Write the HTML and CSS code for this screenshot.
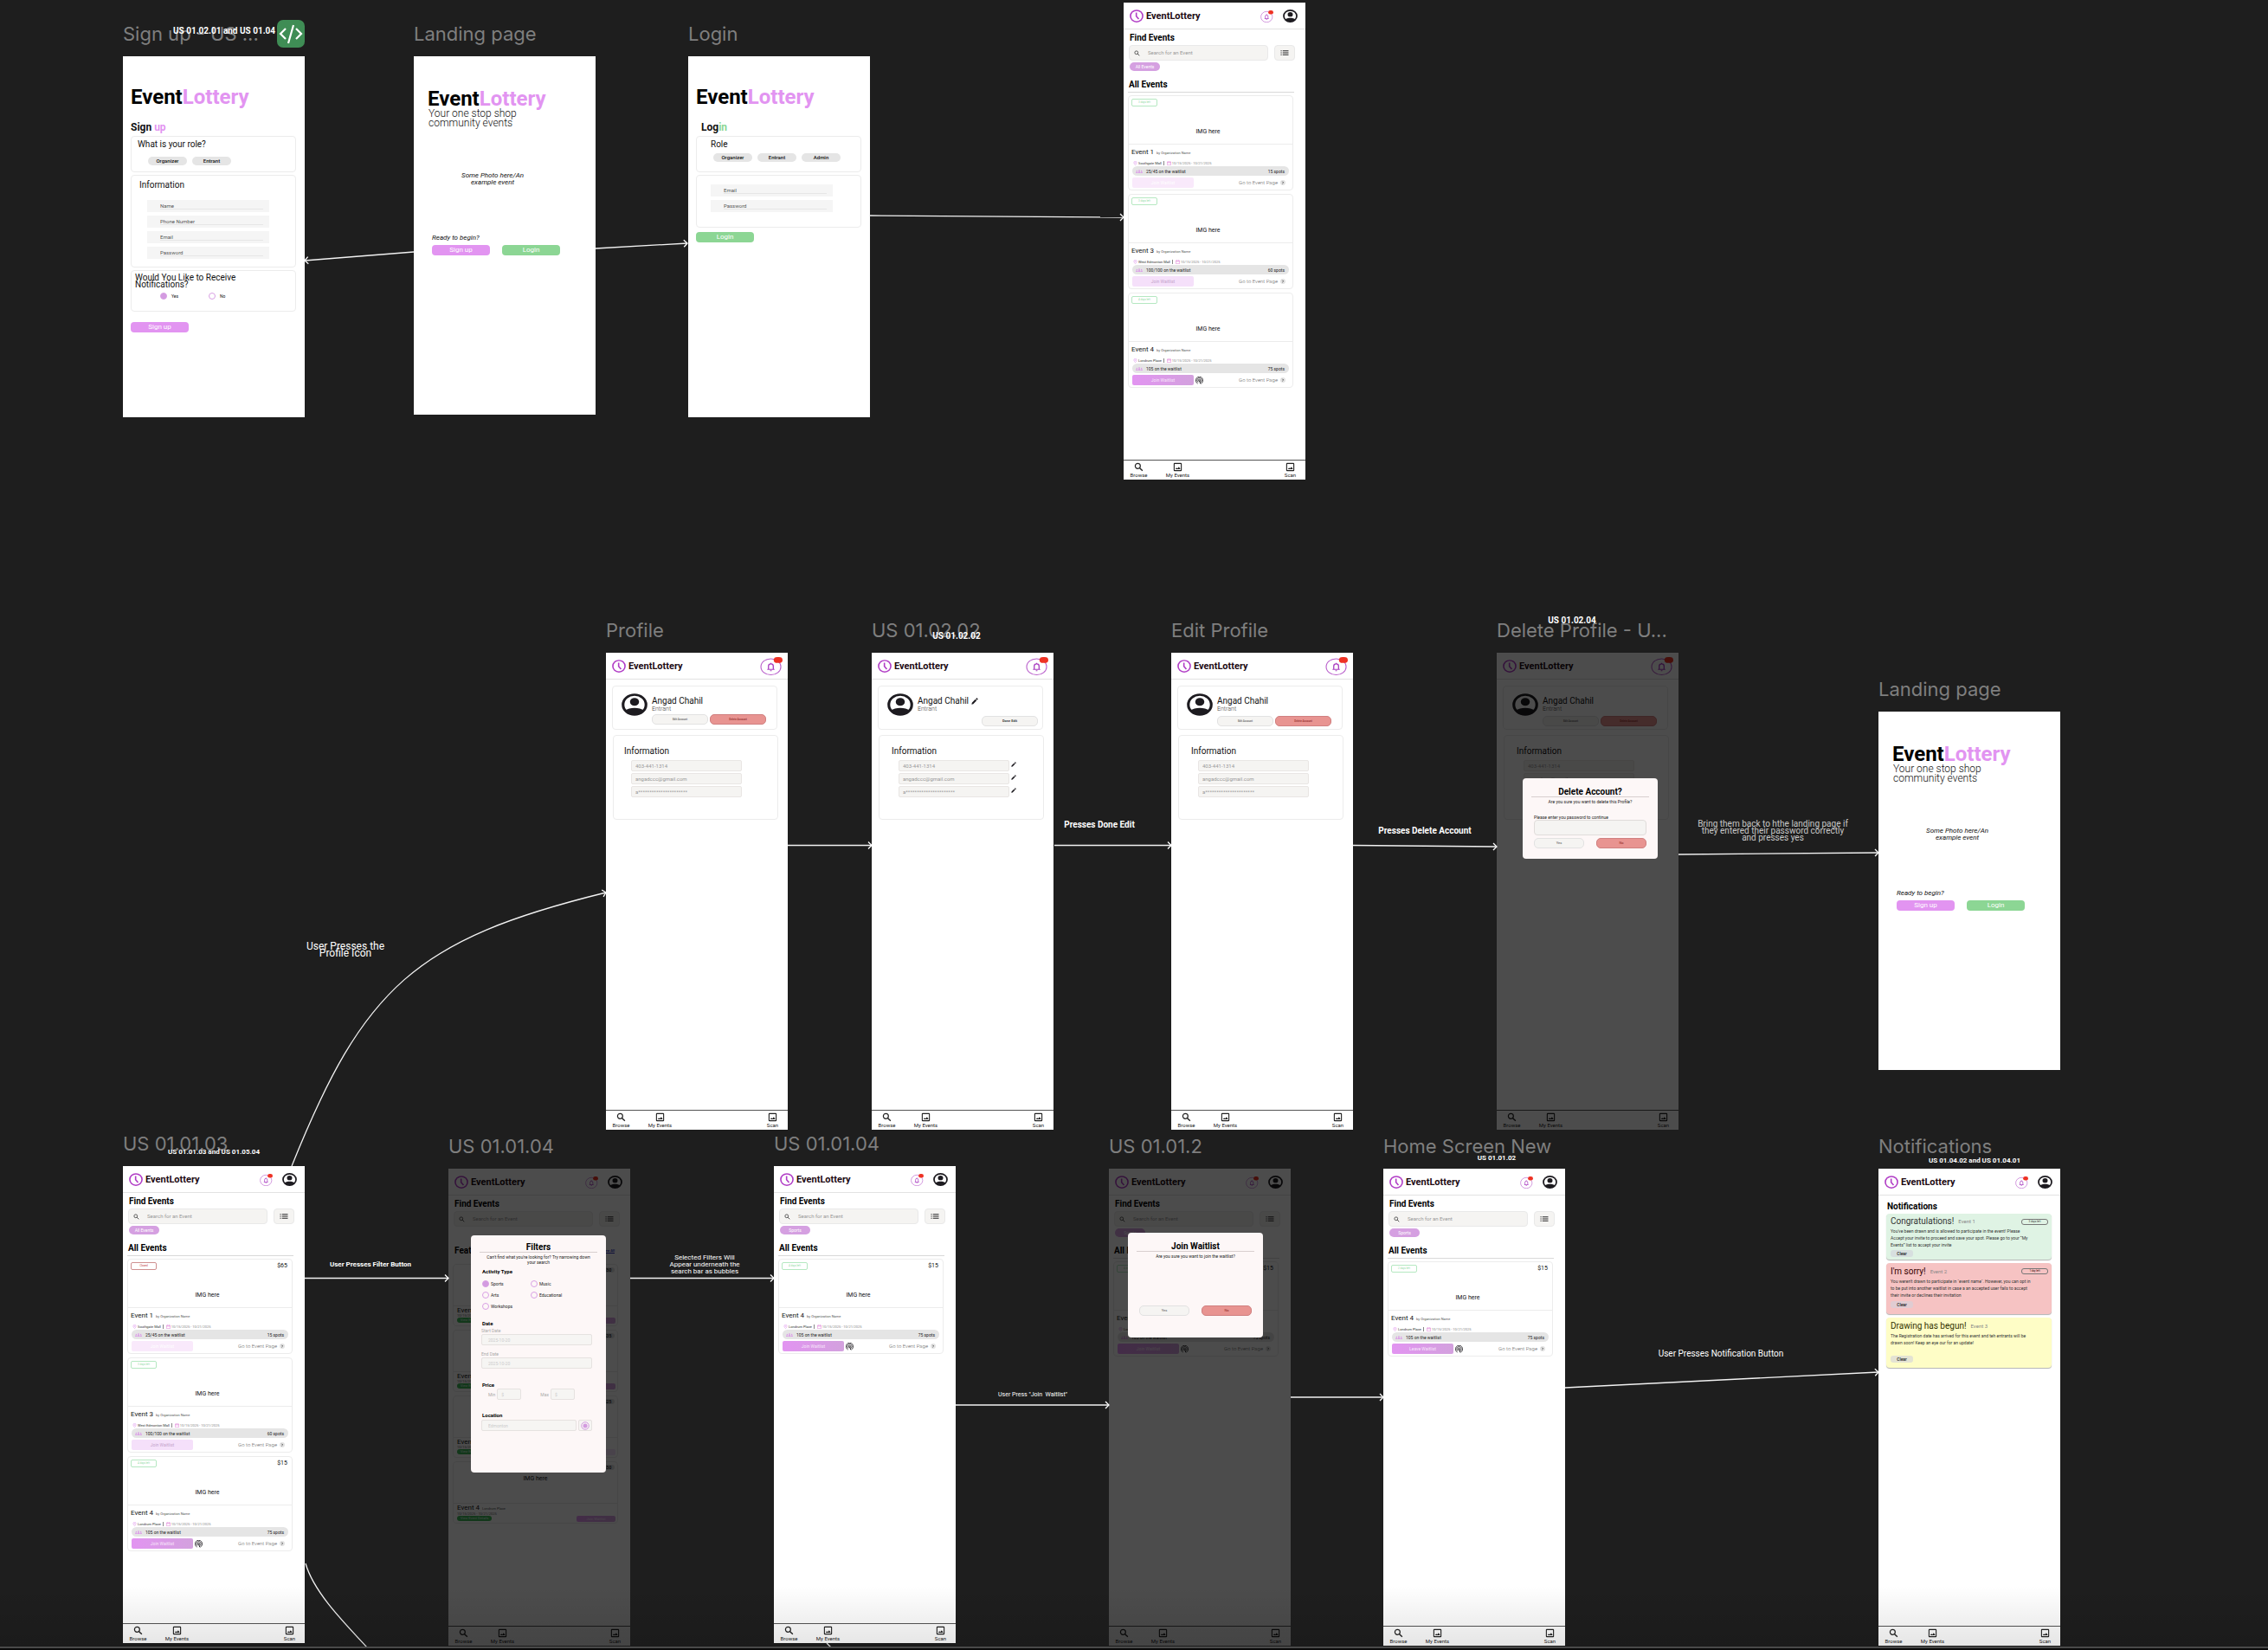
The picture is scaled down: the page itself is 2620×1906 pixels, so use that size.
FILE: index.html
```html
<!DOCTYPE html>
<html lang="en">
<head>
<meta charset="utf-8">
<title>EventLottery – screen flow</title>
<link rel="stylesheet" href="styles.css">
</head>
<body>
<svg class="defs" aria-hidden="true">
  <symbol id="logo" viewBox="0 0 24 24" preserveAspectRatio="none"><circle cx="12" cy="12" r="10.6" fill="none" stroke="#b13dc6" stroke-width="2.4"/><path d="M11.5 5.5v7l4.2 5" fill="none" stroke="#b13dc6" stroke-width="2.4"/></symbol>
  <symbol id="bell" viewBox="0 0 28 28" preserveAspectRatio="none"><circle cx="13.5" cy="15" r="12.4" fill="none" stroke="#b95fcb" stroke-width="1.2"/><path d="M9 19h9M10.500 19v-5a3 3.500 0 0 1 6 0v5M13.500 10.500v-1.500M12.500 21h2" fill="none" stroke="#a93cc0" stroke-width="1.400"/><rect x="17" y="0" width="11" height="9" rx="4.500" fill="#ee3224"/></symbol>
  <symbol id="avatar" viewBox="0 0 24 24" preserveAspectRatio="none"><circle cx="12" cy="12" r="10.600" fill="none" stroke="#1d1b20" stroke-width="2.500"/><circle cx="12" cy="9" r="4.200" fill="#1d1b20"/><path d="M3.500 18.500C7 14.500 17 14.500 20.500 18.500C18 24 6 24 3.500 18.500z" fill="#1d1b20"/></symbol>
  <symbol id="search" viewBox="0 0 24 24"><circle cx="9.500" cy="9.500" r="6.500" fill="none" stroke="currentColor" stroke-width="2.600"/><path d="M14.500 14.500l7 7" stroke="currentColor" stroke-width="3"/></symbol>
  <symbol id="list" viewBox="0 0 24 16"><path d="M6 2h18M6 8h18M6 14h18M0 2h3M0 8h3M0 14h3" stroke="#222" stroke-width="2.600"/></symbol>
  <symbol id="image" viewBox="0 0 24 24"><rect x="3" y="3" width="18" height="18" rx="1" fill="none" stroke="currentColor" stroke-width="2.400"/><path d="M6 17.500l3-4 2.500 2.500 3.500-4.500 4 6z" fill="currentColor"/></symbol>
  <symbol id="pin" viewBox="0 0 12 14"><path d="M6 1a4.500 4.500 0 0 1 4.500 4.500C10.500 9 6 13 6 13S1.500 9 1.500 5.500A4.500 4.500 0 0 1 6 1z" fill="none" stroke="#df93ec" stroke-width="1.600"/><circle cx="6" cy="5.500" r="1.500" fill="#df93ec"/></symbol>
  <symbol id="cal" viewBox="0 0 14 14"><path d="M1 3h12v10H1zM1 5.500h12M4 1v2M10 1v2" fill="none" stroke="#e07fd6" stroke-width="1.600"/></symbol>
  <symbol id="people" viewBox="0 0 24 12"><g fill="#d98ae8"><circle cx="4" cy="4" r="2"/><circle cx="12" cy="3" r="2.600"/><circle cx="20" cy="4" r="2"/><path d="M0 11c0-5 7-5 7 0zM7.500 11c0-6 9-6 9 0zM17 11c0-5 7-5 7 0z"/></g></symbol>
  <symbol id="go" viewBox="0 0 14 14"><circle cx="7" cy="7" r="7" fill="#e3e3e3"/><path d="M5.500 4l3 3-3 3" fill="none" stroke="#333" stroke-width="1.800"/></symbol>
  <symbol id="radar" viewBox="0 0 24 24"><path d="M7 21.500a11 11 0 1 1 10 0M8.500 17.500a7 7 0 1 1 7 0" fill="none" stroke="#1d1b20" stroke-width="2.200"/><circle cx="12" cy="11.500" r="3" fill="none" stroke="#1d1b20" stroke-width="2"/><path d="M12 12l3.500 10" stroke="#1d1b20" stroke-width="2.600"/></symbol>
  <symbol id="pencil" viewBox="0 0 24 24"><path d="M1 23l1.500-6L14 5.500l4.500 4.500L7 21.500zM15.500 4l2.500-2.500c1-1 2-.5 3 .500l1 1c1 1 1.500 2 .500 3L20 8.500z" fill="#1d1b20"/></symbol>
  <symbol id="locate" viewBox="0 0 20 20"><circle cx="10" cy="10" r="8.500" fill="none" stroke="#d39be0" stroke-width="2"/><circle cx="10" cy="10" r="5" fill="#d39be0"/></symbol>
</svg>

<main class="board">

<section class="screen signup short" id="s-signup">
  <h2 class="name">Sign up - US ...</h2>
  <h1 class="brand">Event<span>Lottery</span></h1>
  <h3 class="step">Sign <span class="pink">up</span></h3>
  <div class="panel role">
    <h4>What is your role?</h4>
    <div class="chips"><button>Organizer</button><button>Entrant</button></div>
  </div>
  <div class="panel info">
    <h4>Information</h4>
    <label class="field"><input aria-label="Name" placeholder="Name"></label>
    <label class="field"><input aria-label="Phone Number" placeholder="Phone Number"></label>
    <label class="field"><input aria-label="Email" placeholder="Email"></label>
    <label class="field"><input aria-label="Password" placeholder="Password"></label>
  </div>
  <div class="panel notify">
    <h4>Would You Like to Receive Notifications?</h4>
    <div class="radios"><label><input type="radio" name="n" checked>Yes</label><label><input type="radio" name="n">No</label></div>
  </div>
  <button class="cta pinkbg">Sign up</button>
</section>

<section class="screen landing short" id="s-landing1">
  <h2 class="name">Landing page</h2>
  <h1 class="brand">Event<span>Lottery</span></h1>
  <p class="tagline">Your one stop shop<br>community events</p>
  <p class="photo-note">Some Photo here/An<br>example event</p>
  <p class="ready">Ready to begin?</p>
  <div class="ctas"><button class="cta pinkbg">Sign up</button><button class="cta greenbg">Login</button></div>
</section>

<section class="screen login short" id="s-login">
  <h2 class="name">Login</h2>
  <h1 class="brand">Event<span>Lottery</span></h1>
  <h3 class="step">Log<span class="green">in</span></h3>
  <div class="panel role">
    <h4>Role</h4>
    <div class="chips"><button>Organizer</button><button>Entrant</button><button>Admin</button></div>
  </div>
  <div class="panel creds">
    <label class="field"><input aria-label="Email" placeholder="Email"></label>
    <label class="field"><input aria-label="Password" placeholder="Password"></label>
  </div>
  <button class="cta greenbg">Login</button>
</section>

<section class="screen" id="s-home1">
  <header class="top"><svg class="logo"><use href="#logo"/></svg><b>EventLottery</b><svg class="bell"><use href="#bell"/></svg><svg class="avatar"><use href="#avatar"/></svg></header>
  <h3 class="find">Find Events</h3>
  <div class="searchrow"><label class="search"><svg><use href="#search"/></svg><input aria-label="Search" placeholder="Search for an Event"></label><button class="filter" aria-label="Filters"><svg><use href="#list"/></svg></button></div>
  <span class="bubble">All Events</span>
  <h3 class="all">All Events</h3>
  <div class="cards">
    <article class="card"><div class="photo"><div><span class="tag">3 days left</span></div><p>IMG here</p></div>
      <h4>Event 1 <small>by Organization Name</small></h4>
      <p class="meta"><svg><use href="#pin"/></svg><span>Southgate Mall</span><svg><use href="#cal"/></svg><time>10/15/2025 - 10/21/2025</time></p>
      <p class="wait"><svg><use href="#people"/></svg><span>25/45 on the waitlist</span><span>15 spots</span></p>
      <div class="acts"><button class="join off1">Join Waitlist</button><a href="#">Go to Event Page<svg><use href="#go"/></svg></a></div></article>
    <article class="card"><div class="photo"><div><span class="tag">3 days left</span></div><p>IMG here</p></div>
      <h4>Event 3 <small>by Organization Name</small></h4>
      <p class="meta"><svg><use href="#pin"/></svg><span>West Edmonton Mall</span><svg><use href="#cal"/></svg><time>10/15/2025 - 10/21/2025</time></p>
      <p class="wait"><svg><use href="#people"/></svg><span>100/100 on the waitlist</span><span>60 spots</span></p>
      <div class="acts"><button class="join off2">Join Waitlist</button><a href="#">Go to Event Page<svg><use href="#go"/></svg></a></div></article>
    <article class="card"><div class="photo"><div><span class="tag">4 days left</span></div><p>IMG here</p></div>
      <h4>Event 4 <small>by Organization Name</small></h4>
      <p class="meta"><svg><use href="#pin"/></svg><span>Londrum Place</span><svg><use href="#cal"/></svg><time>10/15/2025 - 10/21/2025</time></p>
      <p class="wait"><svg><use href="#people"/></svg><span>105 on the waitlist</span><span>75 spots</span></p>
      <div class="acts"><button class="join">Join Waitlist</button><svg class="radar"><use href="#radar"/></svg><a href="#">Go to Event Page<svg><use href="#go"/></svg></a></div></article>
  </div>
  <nav><a href="#"><svg><use href="#search"/></svg>Browse</a><a href="#"><svg><use href="#image"/></svg>My Events</a><a href="#"><svg><use href="#image"/></svg>Scan</a></nav>
</section>

<section class="screen" id="s-profile">
  <h2 class="name">Profile</h2>
  <header class="top"><svg class="logo"><use href="#logo"/></svg><b>EventLottery</b><svg class="bell wide"><use href="#bell"/></svg></header>
  <div class="panel person"><svg class="face"><use href="#avatar"/></svg><div><h4>Angad Chahil</h4><p>Entrant</p><div class="pills"><button>Edit Account</button><button class="red">Delete Account</button></div></div></div>
  <div class="panel details"><h4>Information</h4>
    <input aria-label="Phone" value="403-441-1314"><input class="mail" aria-label="Email" value="angadccc@gmail.com"><input aria-label="Password" value="a**********************"></div>
  <nav><a href="#"><svg><use href="#search"/></svg>Browse</a><a href="#"><svg><use href="#image"/></svg>My Events</a><a href="#"><svg><use href="#image"/></svg>Scan</a></nav>
</section>

<section class="screen" id="s-editing">
  <h2 class="name">US 01.02.02</h2>
  <header class="top"><svg class="logo"><use href="#logo"/></svg><b>EventLottery</b><svg class="bell wide"><use href="#bell"/></svg></header>
  <div class="panel person"><svg class="face"><use href="#avatar"/></svg><div><h4>Angad Chahil<svg class="pen"><use href="#pencil"/></svg></h4><p>Entrant</p><div class="pills low end"><button class="done">Done Edit</button></div></div></div>
  <div class="panel details indent"><h4>Information</h4>
    <div class="row"><input aria-label="Phone" value="403-441-1314"><svg><use href="#pencil"/></svg></div><div class="row"><input class="mail" aria-label="Email" value="angadccc@gmail.com"><svg><use href="#pencil"/></svg></div><div class="row"><input aria-label="Password" value="a**********************"><svg><use href="#pencil"/></svg></div></div>
  <nav><a href="#"><svg><use href="#search"/></svg>Browse</a><a href="#"><svg><use href="#image"/></svg>My Events</a><a href="#"><svg><use href="#image"/></svg>Scan</a></nav>
</section>

<section class="screen" id="s-edit">
  <h2 class="name">Edit Profile</h2>
  <header class="top"><svg class="logo"><use href="#logo"/></svg><b>EventLottery</b><svg class="bell wide"><use href="#bell"/></svg></header>
  <div class="panel person"><svg class="face"><use href="#avatar"/></svg><div><h4>Angad Chahil</h4><p>Entrant</p><div class="pills low"><button>Edit Account</button><button class="red">Delete Account</button></div></div></div>
  <div class="panel details indent"><h4>Information</h4>
    <input aria-label="Phone" value="403-441-1314"><input class="mail" aria-label="Email" value="angadccc@gmail.com"><input aria-label="Password" value="a**********************"></div>
  <nav><a href="#"><svg><use href="#search"/></svg>Browse</a><a href="#"><svg><use href="#image"/></svg>My Events</a><a href="#"><svg><use href="#image"/></svg>Scan</a></nav>
</section>

<section class="screen" id="s-delete">
  <h2 class="name">Delete Profile - U...</h2>
  <header class="top"><svg class="logo"><use href="#logo"/></svg><b>EventLottery</b><svg class="bell wide"><use href="#bell"/></svg></header>
  <div class="panel person"><svg class="face"><use href="#avatar"/></svg><div><h4>Angad Chahil</h4><p>Entrant</p><div class="pills low"><button>Edit Account</button><button class="red">Delete Account</button></div></div></div>
  <div class="panel details indent"><h4>Information</h4>
    <input aria-label="Phone" value="403-441-1314"><input class="mail" aria-label="Email" value="angadccc@gmail.com"></div>
  <nav><a href="#"><svg><use href="#search"/></svg>Browse</a><a href="#"><svg><use href="#image"/></svg>My Events</a><a href="#"><svg><use href="#image"/></svg>Scan</a></nav>
  <div class="shade"><div class="modal del">
    <h3>Delete Account?</h3><p>Are you sure you want to delete this Profile?</p>
    <label>Please enter you password to continue<input type="password"></label>
    <div class="yn"><button>Yes</button><button class="red">No</button></div>
  </div></div>
</section>

<section class="screen landing short" id="s-landing2">
  <h2 class="name">Landing page</h2>
  <h1 class="brand">Event<span>Lottery</span></h1>
  <p class="tagline">Your one stop shop<br>community events</p>
  <p class="photo-note">Some Photo here/An<br>example event</p>
  <p class="ready">Ready to begin?</p>
  <div class="ctas"><button class="cta pinkbg">Sign up</button><button class="cta greenbg">Login</button></div>
</section>

<section class="screen" id="s-home2">
  <h2 class="name">US 01.01.03</h2>
  <header class="top"><svg class="logo"><use href="#logo"/></svg><b>EventLottery</b><svg class="bell"><use href="#bell"/></svg><svg class="avatar"><use href="#avatar"/></svg></header>
  <h3 class="find">Find Events</h3>
  <div class="searchrow"><label class="search"><svg><use href="#search"/></svg><input aria-label="Search" placeholder="Search for an Event"></label><button class="filter" aria-label="Filters"><svg><use href="#list"/></svg></button></div>
  <span class="bubble">All Events</span>
  <h3 class="all">All Events</h3>
  <div class="cards">
    <article class="card"><div class="photo"><div><span class="tag closed">Closed</span><b>$65</b></div><p>IMG here</p></div>
      <h4>Event 1 <small>by Organization Name</small></h4>
      <p class="meta"><svg><use href="#pin"/></svg><span>Southgate Mall</span><svg><use href="#cal"/></svg><time>10/15/2025 - 10/21/2025</time></p>
      <p class="wait"><svg><use href="#people"/></svg><span>25/45 on the waitlist</span><span>15 spots</span></p>
      <div class="acts"><button class="join off1">Join Waitlist</button><a href="#">Go to Event Page<svg><use href="#go"/></svg></a></div></article>
    <article class="card"><div class="photo"><div><span class="tag">3 days left</span></div><p>IMG here</p></div>
      <h4>Event 3 <small>by Organization Name</small></h4>
      <p class="meta"><svg><use href="#pin"/></svg><span>West Edmonton Mall</span><svg><use href="#cal"/></svg><time>10/15/2025 - 10/21/2025</time></p>
      <p class="wait"><svg><use href="#people"/></svg><span>100/100 on the waitlist</span><span>60 spots</span></p>
      <div class="acts"><button class="join off2">Join Waitlist</button><a href="#">Go to Event Page<svg><use href="#go"/></svg></a></div></article>
    <article class="card"><div class="photo"><div><span class="tag">4 days left</span><b>$15</b></div><p>IMG here</p></div>
      <h4>Event 4 <small>by Organization Name</small></h4>
      <p class="meta"><svg><use href="#pin"/></svg><span>Londrum Place</span><svg><use href="#cal"/></svg><time>10/15/2025 - 10/21/2025</time></p>
      <p class="wait"><svg><use href="#people"/></svg><span>105 on the waitlist</span><span>75 spots</span></p>
      <div class="acts"><button class="join">Join Waitlist</button><svg class="radar"><use href="#radar"/></svg><a href="#">Go to Event Page<svg><use href="#go"/></svg></a></div></article>
  </div>
  <nav><a href="#"><svg><use href="#search"/></svg>Browse</a><a href="#"><svg><use href="#image"/></svg>My Events</a><a href="#"><svg><use href="#image"/></svg>Scan</a></nav>
</section>

<section class="screen" id="s-filter">
  <h2 class="name">US 01.01.04</h2>
  <header class="top"><svg class="logo"><use href="#logo"/></svg><b>EventLottery</b><svg class="bell"><use href="#bell"/></svg><svg class="avatar"><use href="#avatar"/></svg></header>
  <h3 class="find">Find Events</h3>
  <div class="searchrow"><label class="search"><svg><use href="#search"/></svg><input aria-label="Search" placeholder="Search for an Event"></label><button class="filter" aria-label="Filters"><svg><use href="#list"/></svg></button></div>
  <h3 class="featured">Featured <a href="#">View All</a></h3>
  <div class="feats">
    <article class="feat"><div class="pic"><b>$50</b><p>IMG here</p></div><h4>Event 1</h4><time>10/15/2025 - 10/21/2025</time><div class="both"><button class="view">View Event Details</button><button class="join">Join Waitlist</button></div></article>
    <article class="feat"><div class="pic"><b>$35</b><p>IMG here</p></div><h4>Event 2</h4><time>10/15/2025 - 10/21/2025</time><div class="both"><button class="view">View Event Details</button><button class="join">Join Waitlist</button></div></article>
    <article class="feat"><div class="pic"><b>$25</b><p>IMG here</p></div><h4>Event 3</h4><time>10/15/2025 - 10/21/2025</time><div class="both"><button class="view">View Event Details</button><button class="join off2">Join Waitlist</button></div></article>
    <article class="feat"><div class="pic"><b>$50</b><p>IMG here</p></div><h4>Event 4 <small>Londrum Place</small></h4><time>10/15/2025 - 10/21/2025</time><div class="both"><button class="view">View Event Details</button><button class="join">Join Waitlist</button></div></article>
  </div>
  <nav><a href="#"><svg><use href="#search"/></svg>Browse</a><a href="#"><svg><use href="#image"/></svg>My Events</a><a href="#"><svg><use href="#image"/></svg>Scan</a></nav>
  <div class="shade"><form class="modal filters">
    <h3>Filters</h3><p>Can't find what you're looking for? Try narrowing down your search</p>
    <h4>Activity Type</h4>
    <div class="types"><label><input type="radio" name="t" checked>Sports</label><label><input type="radio" name="t">Music</label><label><input type="radio" name="t">Arts</label><label><input type="radio" name="t">Educational</label><label><input type="radio" name="t">Workshops</label></div>
    <h4 class="date">Date</h4>
    <label class="lab">Start Date<input placeholder="2025-10-20"></label>
    <label class="lab second">End Date<input placeholder="2025-10-20"></label>
    <h4 class="price">Price</h4>
    <div class="range"><label>Min<input placeholder="$"></label><label>Max<input placeholder="$"></label></div>
    <h4 class="place">Location</h4>
    <div class="loc"><input aria-label="Location" placeholder="Edmonton"><button type="button" aria-label="Locate me"><svg><use href="#locate"/></svg></button></div>
  </form></div>
</section>

<section class="screen" id="s-sports">
  <h2 class="name">US 01.01.04</h2>
  <header class="top"><svg class="logo"><use href="#logo"/></svg><b>EventLottery</b><svg class="bell"><use href="#bell"/></svg><svg class="avatar"><use href="#avatar"/></svg></header>
  <h3 class="find">Find Events</h3>
  <div class="searchrow"><label class="search"><svg><use href="#search"/></svg><input aria-label="Search" placeholder="Search for an Event"></label><button class="filter" aria-label="Filters"><svg><use href="#list"/></svg></button></div>
  <span class="bubble">Sports</span>
  <h3 class="all">All Events</h3>
  <div class="cards">
    <article class="card"><div class="photo"><div><span class="tag">4 days left</span><b>$15</b></div><p>IMG here</p></div>
      <h4>Event 4 <small>by Organization Name</small></h4>
      <p class="meta"><svg><use href="#pin"/></svg><span>Londrum Place</span><svg><use href="#cal"/></svg><time>10/15/2025 - 10/21/2025</time></p>
      <p class="wait"><svg><use href="#people"/></svg><span>105 on the waitlist</span><span>75 spots</span></p>
      <div class="acts"><button class="join">Join Waitlist</button><svg class="radar"><use href="#radar"/></svg><a href="#">Go to Event Page<svg><use href="#go"/></svg></a></div></article>
  </div>
  <nav><a href="#"><svg><use href="#search"/></svg>Browse</a><a href="#"><svg><use href="#image"/></svg>My Events</a><a href="#"><svg><use href="#image"/></svg>Scan</a></nav>
</section>

<section class="screen" id="s-join">
  <h2 class="name">US 01.01.2</h2>
  <header class="top"><svg class="logo"><use href="#logo"/></svg><b>EventLottery</b><svg class="bell"><use href="#bell"/></svg><svg class="avatar"><use href="#avatar"/></svg></header>
  <h3 class="find">Find Events</h3>
  <div class="searchrow"><label class="search"><svg><use href="#search"/></svg><input aria-label="Search" placeholder="Search for an Event"></label><button class="filter" aria-label="Filters"><svg><use href="#list"/></svg></button></div>
  <span class="bubble">Sports</span>
  <h3 class="all">All Events</h3>
  <div class="cards">
    <article class="card"><div class="photo"><div><span class="tag">4 days left</span><b>$15</b></div><p>IMG here</p></div>
      <h4>Event 4 <small>by Organization Name</small></h4>
      <p class="meta"><svg><use href="#pin"/></svg><span>Londrum Place</span><svg><use href="#cal"/></svg><time>10/15/2025 - 10/21/2025</time></p>
      <p class="wait"><svg><use href="#people"/></svg><span>105 on the waitlist</span><span>75 spots</span></p>
      <div class="acts"><button class="join">Join Waitlist</button><svg class="radar"><use href="#radar"/></svg><a href="#">Go to Event Page<svg><use href="#go"/></svg></a></div></article>
  </div>
  <nav><a href="#"><svg><use href="#search"/></svg>Browse</a><a href="#"><svg><use href="#image"/></svg>My Events</a><a href="#"><svg><use href="#image"/></svg>Scan</a></nav>
  <div class="shade"><div class="modal joining">
    <h3>Join Waitlist</h3><p>Are you sure you want to join the waitlist?</p>
    <div class="yn"><button>Yes</button><button class="red">No</button></div>
  </div></div>
</section>

<section class="screen" id="s-home3">
  <h2 class="name">Home Screen New</h2>
  <header class="top"><svg class="logo"><use href="#logo"/></svg><b>EventLottery</b><svg class="bell"><use href="#bell"/></svg><svg class="avatar"><use href="#avatar"/></svg></header>
  <h3 class="find">Find Events</h3>
  <div class="searchrow"><label class="search"><svg><use href="#search"/></svg><input aria-label="Search" placeholder="Search for an Event"></label><button class="filter" aria-label="Filters"><svg><use href="#list"/></svg></button></div>
  <span class="bubble">Sports</span>
  <h3 class="all">All Events</h3>
  <div class="cards">
    <article class="card"><div class="photo"><div><span class="tag">2 days left</span><b>$15</b></div><p>IMG here</p></div>
      <h4>Event 4 <small>by Organization Name</small></h4>
      <p class="meta"><svg><use href="#pin"/></svg><span>Londrum Place</span><svg><use href="#cal"/></svg><time>10/15/2025 - 10/21/2025</time></p>
      <p class="wait"><svg><use href="#people"/></svg><span>105 on the waitlist</span><span>75 spots</span></p>
      <div class="acts"><button class="join">Leave Waitlist</button><svg class="radar"><use href="#radar"/></svg><a href="#">Go to Event Page<svg><use href="#go"/></svg></a></div></article>
  </div>
  <nav><a href="#"><svg><use href="#search"/></svg>Browse</a><a href="#"><svg><use href="#image"/></svg>My Events</a><a href="#"><svg><use href="#image"/></svg>Scan</a></nav>
</section>

<section class="screen" id="s-notes">
  <h2 class="name">Notifications</h2>
  <header class="top"><svg class="logo"><use href="#logo"/></svg><b>EventLottery</b><svg class="bell"><use href="#bell"/></svg><svg class="avatar"><use href="#avatar"/></svg></header>
  <h3 class="heading">Notifications</h3>
  <div class="notes">
    <article class="note ok"><h4>Congratulations! <small>Event 1</small><span>3 days left</span></h4><p>You've been drawn and is allowed to participate in the event! Please<br>Accept your invite to proceed and save your spot. Please go to your “My<br>Events” list to accept your invite</p><button>Clear</button></article>
    <article class="note bad"><h4>I'm sorry! <small>Event 2</small><span>1 day left</span></h4><p>You weren't drawn to participate in `event name`. However, you can opt in<br>to be put into another waitlist in case a an accepted user fails to accept<br>their invite or declines their invitation</p><button>Clear</button></article>
    <article class="note draw"><h4>Drawing has begun! <small>Event 3</small></h4><p>The Registration date has arrived for this event and teh entrants will be<br>drawn soon! Keep an eye our for an update!</p><button>Clear</button></article>
  </div>
  <nav><a href="#"><svg><use href="#search"/></svg>Browse</a><a href="#"><svg><use href="#image"/></svg>My Events</a><a href="#"><svg><use href="#image"/></svg>Scan</a></nav>
</section>

<svg class="wires" width="2620" height="1902" aria-hidden="true">
  <defs><marker id="tip" viewBox="0 0 8 10" refX="7" refY="5" markerWidth="8" markerHeight="10" markerUnits="userSpaceOnUse" orient="auto"><path d="M3 1l4 4-4 4" fill="none" stroke="#fff" stroke-width="1.300"/></marker></defs>
  <g fill="none" stroke="#f2f2f2" stroke-width="1.300">
    <path marker-end="url(#tip)" d="M478 291L352 301"/>
    <path marker-end="url(#tip)" d="M688 287L794 281"/>
    <path marker-end="url(#tip)" d="M1004 249L1298 251"/>
    <path marker-end="url(#tip)" d="M910 976.500H1007"/>
    <path marker-end="url(#tip)" d="M1218 976.500H1353"/>
    <path marker-end="url(#tip)" d="M1563 976.500L1729 978"/>
    <path marker-end="url(#tip)" d="M1939 987L2170 985"/>
    <path marker-end="url(#tip)" d="M337 1347C420 1140 480 1085 700 1031"/>
    <path marker-end="url(#tip)" d="M352 1476.500H518"/>
    <path marker-end="url(#tip)" d="M728 1476.500H894"/>
    <path marker-end="url(#tip)" d="M1104 1623H1281"/>
    <path marker-end="url(#tip)" d="M1491 1614H1598"/>
    <path marker-end="url(#tip)" d="M1808 1603L2170 1585"/>
    <path d="M353 1806C362 1838 395 1872 425 1904M955 1898l5 5"/>
  </g>
</svg>

<p class="say b10" id="t1">US 01.02.01 and US 01.04</p>
<span class="dev"><svg viewBox="0 0 32 32"><path d="M10 10l-6 6 6 6M22 10l6 6-6 6M19 6l-6 21" fill="none" stroke="#fff" stroke-width="2.200"/></svg></span>
<p class="say b10" id="t2">US 01.02.02</p>
<p class="say b10" id="t3">US 01.02.04</p>
<p class="say b8" id="t4">US 01.01.03 and US 01.05.04</p>
<p class="say b8" id="t5">US 01.01.02</p>
<p class="say b8" id="t6">US 01.04.02 and US 01.04.01</p>
<p class="say b10" id="t7">Presses Done Edit</p>
<p class="say b10" id="t8">Presses Delete Account</p>
<p class="say r10 dim" id="t9">Bring them back to hthe landing page if<br>they entered their password correctly<br>and presses yes</p>
<p class="say r12" id="t10">User Presses the<br>Profile Icon</p>
<p class="say b8" id="t11">User Presses Filter Button</p>
<p class="say r8" id="t12">Selected Filters Will<br>Appear underneath the<br>search bar as bubbles</p>
<p class="say r7" id="t13">User Press "Join&nbsp; Waitlist"</p>
<p class="say r10" id="t14">User Presses Notification Button</p>
<div class="fade"></div>
</main>
</body>
</html>
```
FILE: styles.css
```css
* { box-sizing: border-box; margin: 0; padding: 0; }
body { background: #1e1e1e; font-family: Roboto, "Liberation Sans", sans-serif; color: #111; }
button, input { font: inherit; color: inherit; border: 0; background: none; outline: 0; min-width: 0; }
a { color: inherit; text-decoration: none; }
h4 { font-weight: 400; }
svg { display: block; flex: none; }
.defs { position: absolute; width: 0; height: 0; }
.board { position: relative; width: 100%; height: 100vh; overflow: hidden; background: #1e1e1e; border-bottom: 2px solid #0a0a0a; }
.wires { position: absolute; left: 0; top: 0; }
.fade { position: absolute; left: 0; right: 0; bottom: 0; height: 72px; border-bottom: 2px solid #4a4a4a; background: linear-gradient(transparent, rgba(0, 0, 0, .1)); pointer-events: none; }

/* screens on the canvas */
.screen { position: absolute; width: 210px; min-height: 551px; background: #fff; display: flex; flex-direction: column; align-items: flex-start; }
.screen.short { min-height: 414px; }
.screen.signup, .screen.login { min-height: 417px; }
.name { position: absolute; left: 0; bottom: 100%; padding-bottom: 13px; font: 400 22px/26px Inter, sans-serif; color: #7f7f7f; white-space: nowrap; }
#s-signup { left: 142px; top: 65px; }
#s-landing1 { left: 478px; top: 65px; }
#s-login { left: 795px; top: 65px; }
#s-home1 { left: 1298px; top: 3px; }
#s-profile { left: 700px; top: 754px; }
#s-editing { left: 1007px; top: 754px; }
#s-edit { left: 1353px; top: 754px; }
#s-delete { left: 1729px; top: 754px; }
#s-landing2 { left: 2170px; top: 822px; }
#s-home2 { left: 142px; top: 1347px; }
#s-filter { left: 518px; top: 1350px; }
#s-sports { left: 894px; top: 1347px; }
#s-join { left: 1281px; top: 1350px; }
#s-home3 { left: 1598px; top: 1350px; }
#s-notes { left: 2170px; top: 1350px; }

.brand { font-size: 24px; line-height: 28px; font-weight: 700; color: #000; }
.brand span, .pink { color: #e294f1; }
.green { color: #8cd694; }
.panel { width: 191px; border: 1px solid #ececec; border-radius: 4px; }
.panel h4 { font-size: 10px; line-height: 12px; }
.cta { width: 67px; height: 12px; border-radius: 4px; font-size: 8px; line-height: 12px; color: #fff; }
.pinkbg { background: #e294f1; }
.greenbg { background: #8cd694; }

/* sign up and login */
.signup, .login { padding: 33px 9px 0; }
.step { margin-top: 14px; font-size: 12px; line-height: 14px; font-weight: 700; }
.login .step { padding-left: 6px; }
.role { height: 42px; margin-top: 3px; padding: 3px 7px; }
.login .role { padding-left: 16px; }
.chips { display: flex; gap: 6px; margin: 8px 0 0 12px; }
.login .chips { margin: 4px 0 0 3px; }
.chips button { width: 45px; height: 10px; border-radius: 5px; background: #e5e5e5; font-size: 6px; line-height: 10px; font-weight: 500; }
.info { height: 107px; margin-top: 3px; padding: 5px 9px; }
.info h4 { margin-bottom: 11px; }
.field { display: block; width: 141px; height: 14px; margin: 0 0 4px 9px; padding: 3px 7px 0 15px; background: #f5f5f5; }
.field input { display: block; width: 100%; height: 8px; border-bottom: 1px solid #e6e6e6; font-size: 6px; line-height: 7px; }
.field input::placeholder { color: #555; opacity: 1; }
.notify { height: 48px; margin-top: 3px; padding: 4px; }
.panel.notify h4 { line-height: 8px; padding-right: 50px; }
.radios { display: flex; gap: 34px; margin: 5px 0 0 29px; }
.radios label { display: flex; align-items: center; gap: 5px; width: 22px; font-size: 5px; line-height: 8px; }
input[type=radio] { appearance: none; flex: none; width: 8px; height: 8px; border: 1px solid #d9a0e4; border-radius: 50%; }
input[type=radio]:checked { background: #d39be0; }
.signup .cta { margin-top: 12px; }
.creds { height: 61px; margin-top: 3px; padding: 10px 7px; }
.login .cta { margin-top: 5px; }

/* landing */
.landing { padding: 35px 16px 0; }
.tagline { font-size: 12px; line-height: 11px; font-weight: 300; padding-left: 1px; margin-top: -2px; }
.photo-note { width: 150px; margin-top: 51px; font-size: 8px; line-height: 8px; font-style: italic; text-align: center; }
.ready { margin: 53px 0 0 5px; font-size: 8px; line-height: 14px; font-style: italic; }
.ctas { display: flex; gap: 14px; margin: 1px 0 0 5px; }

/* header and tab bar */
.top { display: flex; align-items: center; width: 100%; height: 31px; padding: 1px 9px 0 7px; border-bottom: 1px solid #e2e2e2; }
.top b { margin: 0 auto 0 3px; font-size: 11px; line-height: 14px; color: #210a12; }
.logo { width: 16px; height: 15px; }
.bell { width: 15px; height: 14px; margin-right: 11px; }
.bell.wide { width: 26px; height: 21px; margin-right: -3px; }
.avatar { width: 17px; height: 15px; }
nav { display: flex; align-self: stretch; height: 23px; margin-top: auto; padding: 2px 2px 0; border-top: 1px solid #555; color: #222; }
nav a { display: flex; flex-direction: column; align-items: center; width: 31px; font-size: 6px; line-height: 7px; }
nav a:nth-child(2) { margin-left: 14px; }
nav a:last-child { margin-left: auto; }
nav svg { width: 11px; height: 11px; }

/* home */
.find, .all, .heading, .featured { font-size: 10px; line-height: 12px; font-weight: 700; color: #000; }
.find { margin: 4px 0 0 7px; }
.searchrow { display: flex; gap: 7px; margin: 2px 0 0 6px; }
.search { display: flex; align-items: center; gap: 9px; width: 161px; height: 18px; padding: 0 5px; border: 1px solid #e9e9e9; border-radius: 4px; background: #f5f4f2; color: #333; }
.search svg { width: 7px; height: 7px; }
.search input { font-size: 6px; line-height: 8px; height: 8px; }
.search input::placeholder { color: #999; opacity: 1; }
.filter { display: grid; place-items: center; width: 24px; height: 18px; border: 1px solid #e9e9e9; border-radius: 4px; background: #f5f4f2; }
.filter svg { width: 10px; height: 6px; }
.bubble { width: 35px; height: 10px; margin: 2px 0 0 7px; border-radius: 5px; background: #d5a0e1; color: #fff; font-size: 5px; line-height: 10px; text-align: center; }
.all { width: 192px; height: 15px; margin: 10px 0 3px 5px; padding-left: 1px; border-bottom: 1px solid #d9d9d9; }
.cards { display: flex; flex-direction: column; gap: 4px; margin: 0 0 0 5px; }
.card { width: 191px; height: 110px; border: 1px solid #ececec; border-radius: 4px; }
.photo { height: 56px; padding: 3px 5px 0 3px; border-bottom: 1px solid #ececec; font-size: 7px; line-height: 8px; text-align: center; }
.photo div { display: flex; justify-content: space-between; height: 10px; margin-bottom: 24px; }
.photo b { font-weight: 400; }
.photo p { padding-right: 4px; }
.tag { width: 30px; height: 9px; border: 1px solid #b5e8c1; border-radius: 2px; color: #8fd89f; font-size: 3px; line-height: 7px; }
.closed { border-color: #cf9090; color: #c04040; }
.card h4 { margin: 3px 3px 0; font-size: 8px; line-height: 12px; }
.card small, .feat small { margin-left: 1px; font-size: 4px; color: #555; }
.meta { display: flex; align-items: center; gap: 1px; height: 8px; margin: 1px 5px 0; font-size: 4px; color: #333; }
.meta svg { width: 5px; height: 5px; }
.meta span { margin-right: 2px; padding-right: 2px; border-right: 1px solid #888; }
.meta time { color: #888; }
.wait { display: flex; align-items: center; height: 11px; margin: 0 4px; padding: 0 5px 0 4px; border-radius: 6px; background: #e5e5e5; font-size: 5px; color: #222; }
.wait svg { width: 8px; height: 4px; margin-right: 4px; }
.wait span:last-child { margin-left: auto; }
.acts { display: flex; align-items: center; gap: 2px; margin: 2px 8px 0 4px; }
.join { width: 71px; height: 12px; border-radius: 2px; background: linear-gradient(90deg, #e294f1, #d3a1de); color: #f8e6fb; font-size: 5px; line-height: 12px; }
.off1 { background: #f9e9fb; color: #fff; }
.off2 { background: #f5e0fa; color: #c4a3cb; }
.radar { width: 9px; height: 9px; }
.acts a { display: flex; align-items: center; gap: 3px; margin-left: auto; font-size: 6px; line-height: 8px; font-weight: 300; color: #666; }
.acts a svg { width: 6px; height: 6px; }

/* featured list behind the filter dialog */
.featured { display: flex; justify-content: space-between; width: 185px; margin: 22px 0 9px 7px; }
.featured a { font-size: 4px; color: #3030c0; text-decoration: underline; }
.feats { display: flex; flex-direction: column; gap: 4px; margin-left: 5px; }
.feat { width: 191px; height: 72px; border: 1px solid #ececec; border-radius: 4px; font-size: 4px; line-height: 5px; }
.pic { height: 45px; border-bottom: 1px solid #ececec; font-size: 7px; line-height: 8px; text-align: center; }
.pic b { display: block; width: 16px; height: 6px; margin: 3px 3px 6px auto; border-radius: 3px; background: #ddd; font-size: 5px; line-height: 6px; font-weight: 500; }
.feat h4 { margin: 1px 4px 0; font-size: 8px; line-height: 8px; }
.feat time { display: block; margin-left: 4px; line-height: 4px; color: #666; }
.both { display: flex; justify-content: space-between; margin: 0 2px 0 4px; }
.view { width: 40px; height: 6px; border-radius: 3px; background: #3fb958; color: #dff5e3; font-size: 4px; line-height: 6px; }
.feat .join { width: 45px; height: 7px; font-size: 4px; line-height: 7px; }

/* profile */
.person { display: flex; gap: 5px; height: 51px; margin: 7px 0 0 7px; padding: 8px 10px 0; }
.face { width: 30px; height: 26px; }
.person > div { flex: 1; }
.person h4 { display: flex; align-items: center; gap: 3px; margin-top: 3px; }
.pen { width: 8px; height: 8px; }
.person p { font-size: 7px; line-height: 7px; font-weight: 300; color: #444; }
.pills { display: flex; gap: 2px; margin-top: 2px; margin-right: -6px; }
.pills.low { margin: 4px -8px 0 0; }
.pills.end { justify-content: flex-end; margin-right: -5px; }
.pills button, .yn button { width: 65px; height: 12px; border: 1px solid #e2e2e2; border-radius: 5px; background: #f5f4f2; font-size: 3px; line-height: 10px; font-weight: 700; color: #777; }
.pills button.done { font-size: 4px; color: #444; }
.pills .red, .yn .red { background: #e89491; border-color: #d08080; color: #a03a3a; }
.details { height: 98px; margin: 6px 0 0 8px; padding: 12px 12px 0; }
.details h4 { margin-bottom: 4px; }
.indent { padding-left: 14px; }
.details input { display: block; width: 128px; height: 13px; margin: 0 0 2px 8px; padding: 0 4px; border: 1px solid #e9e6e4; border-radius: 2px; background: #f5f4f2; color: #999; font-size: 6px; }
.details .mail { text-decoration: underline; }
.row { display: flex; align-items: flex-start; gap: 2px; }
.row svg { width: 6px; height: 6px; margin-top: 2px; }

/* dialogs */
.shade { position: absolute; inset: 0; background: rgba(0, 0, 0, .7); }
.modal { width: 156px; border-radius: 4px; background: #fdf7f7; font-size: 5px; line-height: 6px; color: #222; }
.modal h3 { margin: 0 10px; padding-top: 10px; border-bottom: 1px solid #d8cfcf; font-size: 10px; line-height: 11px; text-align: center; color: #000; }
.modal p { margin: 2px 14px 0; text-align: center; }
.del { height: 93px; margin: 145px 0 0 30px; }
.del label { display: block; margin: 12px 13px 0; }
.del input { display: block; width: 130px; height: 18px; border: 1px solid #e0dcda; border-radius: 4px; background: #f5f4f2; }
.yn { display: flex; justify-content: space-between; margin: 3px 13px 0; }
.yn button { width: 58px; font-size: 4px; font-weight: 500; }
.joining { height: 121px; margin: 74px 0 0 22px; }
.joining .yn { margin-top: 54px; }
.filters { height: 274px; margin: 77px 0 0 26px; }
.filters h3 { padding-top: 8px; }
.filters h4 { margin: 2px 13px 0; font-size: 6px; line-height: 8px; font-weight: 700; color: #000; }
.filters p + h4 { margin-top: 4px; }
.types { display: grid; grid-template-columns: 56px 60px; row-gap: 5px; margin: 6px 13px 0; }
.types label { display: flex; align-items: center; gap: 2px; line-height: 8px; }
.filters .date { margin-top: 12px; }
.lab { display: block; margin-left: 12px; line-height: 8px; color: #aaa; }
.second { margin-top: 6px; }
.filters input:not([type=radio]) { display: block; width: 128px; height: 13px; padding: 0 7px; border: 1px solid #e6e2e0; border-radius: 2px; background: #f6f5f3; font-size: 5px; }
.filters input::placeholder { color: #ccc; opacity: 1; }
.filters .price { margin-top: 15px; }
.range { display: flex; margin-left: 20px; gap: 22px; color: #aaa; }
.range label { display: flex; align-items: center; gap: 2px; }
.filters .range input { width: 28px; padding: 0 4px; }
.filters .place { margin-top: 14px; }
.loc { display: flex; gap: 2px; margin: 1px 0 0 12px; }
.filters .loc input { width: 110px; }
.loc button { display: grid; place-items: center; width: 16px; height: 13px; border: 1px solid #e6e2e0; border-radius: 2px; background: #f6f5f3; }
.loc svg { width: 10px; height: 10px; }

/* notifications */
.heading { margin: 7px 0 2px 10px; }
.notes { display: flex; flex-direction: column; gap: 4px; margin-left: 9px; }
.note { width: 191px; height: 59px; padding: 2px 4px 0 5px; border-radius: 4px; box-shadow: 0 1px 1px rgba(0, 0, 0, .3); font-size: 5px; line-height: 8px; color: #333; }
.note h4 { display: flex; align-items: center; gap: 5px; font-size: 10px; line-height: 14px; }
.note small { font-size: 6px; color: #888; }
.note h4 span { width: 31px; height: 7px; margin-left: auto; border: 1px solid #777; border-radius: 3px; font-size: 3px; line-height: 5px; text-align: center; }
.note button { display: block; width: 26px; height: 8px; margin-top: 2px; border-radius: 3px; background: rgba(210, 210, 220, .6); color: #222; font-size: 5px; font-weight: 500; line-height: 8px; }
.ok { height: 53px; background: #dff3e4; }
.bad { background: #f6c3c3; }
.bad h4 { height: 15px; line-height: 18px; color: #300; }
.bad button { margin-top: 3px; }
.draw { height: 58px; background: #fefdc6; }
.draw h4 { height: 15px; line-height: 20px; color: #330; }
.draw button { margin-top: 11px; }

/* notes written on the canvas */
.say { position: absolute; transform: translate(-50%, -50%); color: #fff; text-align: center; white-space: nowrap; line-height: 8px; }
.b10 { font-size: 10px; font-weight: 700; }
.b8 { font-size: 8px; font-weight: 700; }
.r12 { font-size: 12px; }
.r10 { font-size: 10px; }
.r8 { font-size: 8px; }
.r7 { font-size: 7px; }
.dim { color: #c8c8c8; }
#t1 { left: 259px; top: 36px; }
#t2 { left: 1105px; top: 735px; }
#t3 { left: 1816px; top: 717px; }
#t4 { left: 247px; top: 1331px; }
#t5 { left: 1729px; top: 1338px; }
#t6 { left: 2281px; top: 1341px; }
#t7 { left: 1270px; top: 953px; }
#t8 { left: 1646px; top: 960px; }
#t9 { left: 2048px; top: 960px; }
#t10 { left: 399px; top: 1097px; }
#t11 { left: 428px; top: 1461px; }
#t12 { left: 814px; top: 1461px; }
#t13 { left: 1193px; top: 1611px; }
#t14 { left: 1988px; top: 1564px; }
.dev { position: absolute; left: 320px; top: 23px; width: 32px; height: 32px; border-radius: 7px; background: #3f8d55; }
```
